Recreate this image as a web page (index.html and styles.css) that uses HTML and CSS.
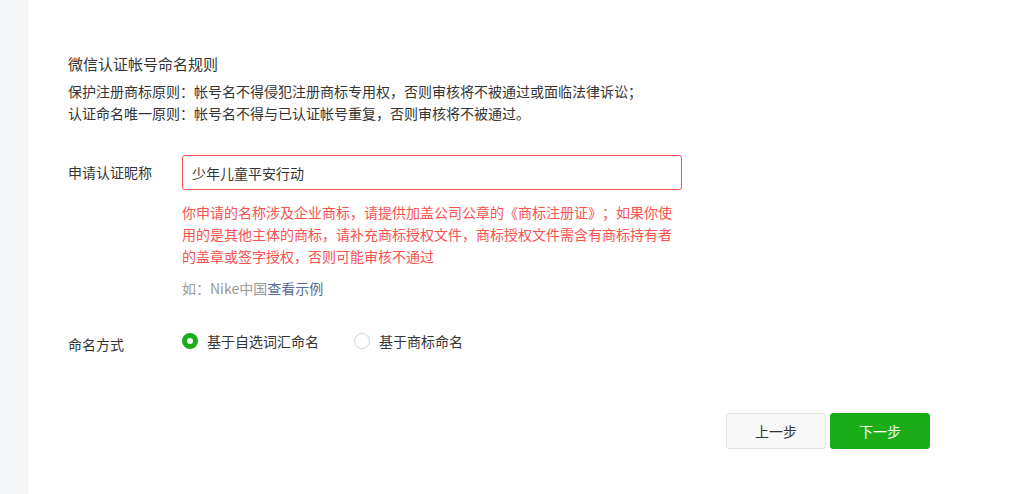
FILE: index.html
```html
<!DOCTYPE html>
<html lang="zh-CN">
<head>
    <meta charset="UTF-8">
    <meta name="viewport" content="width=device-width, initial-scale=1.0">
    <title>微信认证</title>
    <link rel="stylesheet" href="styles.css">
</head>
<body>

<div class="page">
    <div class="sidebar"></div>

    <div class="main">
        <div class="rules">
            <div class="rules-title">微信认证帐号命名规则</div>
            <p>保护注册商标原则：帐号名不得侵犯注册商标专用权，否则审核将不被通过或面临法律诉讼；</p>
            <p>认证命名唯一原则：帐号名不得与已认证帐号重复，否则审核将不被通过。</p>
        </div>

        <div class="form-row">
            <label class="form-label input-label">申请认证昵称</label>
            <div class="form-field">
                <input class="text-input error" type="text" value="少年儿童平安行动">
                <div class="error-msg">你申请的名称涉及企业商标，请提供加盖公司公章的《商标注册证》；如果你使用的是其他主体的商标，请补充商标授权文件，商标授权文件需含有商标持有者的盖章或签字授权，否则可能审核不通过</div>
                <div class="hint">如：Nike中国<a href="#" class="link">查看示例</a></div>
            </div>
        </div>

        <div class="form-row radio-row">
            <label class="form-label radio-label">命名方式</label>
            <div class="form-field radios">
                <label class="radio checked"><span class="radio-dot"></span>基于自选词汇命名</label>
                <label class="radio"><span class="radio-dot"></span>基于商标命名</label>
            </div>
        </div>

        <div class="actions">
            <button class="btn btn-default">上一步</button>
            <button class="btn btn-primary">下一步</button>
        </div>
    </div>
</div>

</body>
</html>
```

FILE: styles.css
```css
body {
    margin: 0;
    font-family: "Noto Sans CJK SC", "Noto Sans", sans-serif;
    font-size: 14px;
    color: #353535;
    background-color: #ffffff;
    text-spacing-trim: space-all;
}

.page {
    display: flex;
    min-height: 494px;
}

.sidebar {
    width: 27px;
    background-color: #f6f7f9;
    border-right: 1px solid #f0f1f4;
}

.main {
    flex: 1;
    padding: 53px 86px 0 40px;
}

.rules-title {
    font-size: 15px;
    line-height: 22px;
    margin-bottom: 5px;
}

.rules p {
    margin: 0;
    line-height: 22px;
}

.form-row {
    display: flex;
    margin-top: 31px;
}

.form-label {
    width: 114px;
    flex-shrink: 0;
}

.input-label {
    line-height: 35px;
}

.form-field {
    width: 500px;
}

.text-input {
    box-sizing: border-box;
    width: 100%;
    height: 35px;
    padding: 0 9px;
    border: 1px solid #e0e0e0;
    border-radius: 3px;
    font-family: inherit;
    font-size: 14px;
    color: #353535;
    outline: none;
}

.text-input.error {
    border-color: #fa5151;
}

.error-msg {
    margin-top: 11px;
    line-height: 22px;
    color: #fa5151;
}

.hint {
    margin-top: 10px;
    line-height: 22px;
    color: #9a9a9a;
}

.link {
    color: #576b95;
    text-decoration: none;
}

.radio-row {
    margin-top: 28px;
}

.radio-label {
    line-height: 22px;
    padding-top: 6px;
}

.radios {
    display: flex;
    gap: 35px;
}

.radio {
    display: flex;
    align-items: center;
    line-height: 22px;
    cursor: pointer;
}

.radio-dot {
    box-sizing: border-box;
    width: 16px;
    height: 16px;
    margin-right: 9px;
    border: 1px solid #d4d4d4;
    border-radius: 50%;
    background-color: #ffffff;
}

.radio.checked .radio-dot {
    border: 5px solid #1aad19;
}

.actions {
    display: flex;
    justify-content: flex-end;
    gap: 4px;
    margin-top: 58px;
}

.btn {
    box-sizing: border-box;
    width: 100px;
    height: 36px;
    border-radius: 3px;
    font-family: inherit;
    font-size: 14px;
    cursor: pointer;
}

.btn-default {
    background-color: #f8f8f8;
    border: 1px solid #e2e3e5;
    color: #353535;
}

.btn-primary {
    background-color: #1aad19;
    border: 1px solid #1aad19;
    color: #ffffff;
}
```
